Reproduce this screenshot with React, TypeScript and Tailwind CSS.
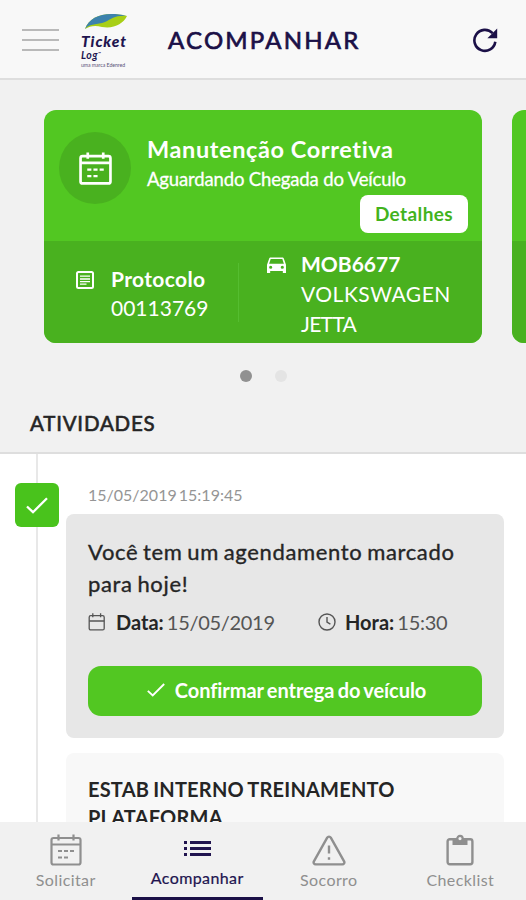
import type { ReactNode } from 'react';

type Tab = 'solicitar' | 'acompanhar' | 'socorro' | 'checklist';

function CalendarIcon({ className, stroke = 2.6 }: { className: string; stroke?: number }) {
  return (
    <svg viewBox="0 0 32 32" className={className} fill="none" stroke="currentColor" strokeWidth={stroke}>
      <rect x="1.5" y="4" width="29" height="26.5" rx="2" />
      <path d="M2 10.5h28M8.5 0.5v6M23.5 0.5v6" />
      <path d="M8 17h4M14 17h4M20 17h4M8 23.5h4M14 23.5h4" strokeWidth="2.2" />
    </svg>
  );
}

function SmallCalendarIcon() {
  return (
    <svg viewBox="0 0 18 18" className="size-[18px]" fill="none" stroke="#555" strokeWidth="1.3">
      <rect x="1.2" y="2.7" width="15" height="14.2" rx="1.5" />
      <path d="M1.2 8h15M4.8 0.3v4M12.6 0.3v4" />
    </svg>
  );
}

function ClockIcon() {
  return (
    <svg viewBox="0 0 18 18" className="size-[18px]" fill="none" stroke="#555" strokeWidth="1.4">
      <circle cx="9" cy="9" r="8" />
      <path d="M9 4v5.2l3.4 1.9" />
    </svg>
  );
}

function DocumentIcon() {
  return (
    <svg viewBox="0 0 18 18" className="size-[18px]" fill="none" stroke="white">
      <rect x="1" y="1" width="16" height="16" rx="1.5" strokeWidth="2" />
      <path d="M4 5.2h10M4 8h10M4 10.6h10M4 13.2h6.5" strokeWidth="1.3" />
    </svg>
  );
}

function CarIcon() {
  return (
    <svg viewBox="3 4.5 18 15.5" className="h-[16px] w-[19px]" fill="white" preserveAspectRatio="none">
      <path d="M18.92 6.01C18.72 5.42 18.16 5 17.5 5h-11c-.66 0-1.21.42-1.42 1.01L3 12v8h3v-2h12v2h3v-8l-2.08-5.99zM6.5 16a1.5 1.5 0 1 1 0-3 1.5 1.5 0 0 1 0 3zm11 0a1.5 1.5 0 1 1 0-3 1.5 1.5 0 0 1 0 3zM5 11l1.5-4.5h11L19 11H5z" />
    </svg>
  );
}

function CheckIcon({ className }: { className: string }) {
  return (
    <svg viewBox="0 0 22 17" className={className} fill="none" stroke="white" strokeWidth="2.3">
      <path d="M1 9.5 7 15.2 21 1.2" />
    </svg>
  );
}

function ListIcon() {
  return (
    <svg viewBox="0 0 27 17" className="h-[17px] w-[27px]" fill="#21144f">
      <path d="M0 1h3v3H0zM0 7h3v3H0zM0 13h3v3H0zM6 1h21v3H6zM6 7h21v3H6zM6 13h21v3H6z" />
    </svg>
  );
}

function WarningIcon() {
  return (
    <svg viewBox="0 0 34 31" className="h-[31px] w-[34px]" fill="none" stroke="currentColor" strokeWidth="2.4" strokeLinejoin="round">
      <path d="M15.2 2.6a2.1 2.1 0 0 1 3.6 0l13.3 23.8a2 2 0 0 1-1.8 3H3.7a2 2 0 0 1-1.8-3z" />
      <path d="M17 10.5v8M17 22.2v2.5" />
    </svg>
  );
}

function ClipboardIcon() {
  return (
    <svg viewBox="0 0 28 32" className="h-[32px] w-[28px]" fill="none" stroke="currentColor" strokeWidth="2.4">
      <rect x="1.6" y="5.2" width="24.8" height="25" rx="2.2" />
      <path d="M6.5 5h4.2a3.3 3.3 0 0 1 6.6 0h4.2v6h-15z" fill="currentColor" stroke="none" />
      <circle cx="14" cy="4.6" r="2.7" fill="#f1f1f1" strokeWidth="2.2" />
    </svg>
  );
}

function RefreshIcon() {
  return (
    <svg viewBox="0 0 26 26" className="size-[26px]" fill="none" stroke="#1b1047" strokeWidth="2.6">
      <path d="M23.3 14.8A10.5 10.5 0 1 1 20.6 6.2" />
      <path d="M25.2 1.4v9.8h-9.8z" fill="#1b1047" stroke="none" />
    </svg>
  );
}

function Logo() {
  return (
    <div className="flex w-[48px] flex-col whitespace-nowrap text-[#21144f]">
      <svg viewBox="0 0 42 17" className="ml-[4px] h-[17px] w-[42px]">
        <path d="M0 16C5 3 20-2 42 3 38 11 29 16 17 14 10 12 5 13 0 16z" fill="#a8cf16" />
        <path d="M0 16C5 3 20-2 42 3 30 2 27 6 20 9 12 12 5 10 0 16z" fill="#3c82ad" />
      </svg>
      <span className="mt-[2px] text-[15.5px] leading-[18px] font-black tracking-[0.9px] italic">Ticket</span>
      <span className="flex text-[10.5px] leading-[11px] font-bold tracking-[0.5px] italic">
        Log<span className="pt-px text-[4px] leading-[5px]">™</span>
      </span>
      <span className="mt-px text-[5.2px] leading-[7px] tracking-[-0.05px] text-[#5a5378]">uma marca Edenred</span>
    </div>
  );
}

function Header() {
  return (
    <header className="flex h-[80px] shrink-0 items-center border-b-2 border-[#dedede] bg-[#f8f8f8]">
      <button className="ml-[22px] flex w-[37px] flex-col gap-[8px] pt-[2px]">
        <span className="h-[2px] w-full bg-[#b9b9b9]" />
        <span className="h-[2px] w-full bg-[#b9b9b9]" />
        <span className="h-[2px] w-full bg-[#b9b9b9]" />
      </button>
      <div className="ml-[22px] pt-[4px]">
        <Logo />
      </div>
      <h1 className="ml-[39px] pt-[2px] text-[24px] tracking-[2.2px] text-[#1b1047] [-webkit-text-stroke:0.7px]">
        ACOMPANHAR
      </h1>
      <button className="mr-[28px] ml-auto pt-[2px]">
        <RefreshIcon />
      </button>
    </header>
  );
}

function OrderCard() {
  return (
    <div className="flex h-[233px] w-[438px] shrink-0 flex-col overflow-hidden rounded-[12px] bg-[#52c722] text-white">
      <div className="flex h-[131px] pt-[22px] pl-[15px]">
        <div className="flex size-[72px] items-center justify-center rounded-full bg-[#49b11f]">
          <CalendarIcon className="size-[33px]" />
        </div>
        <div className="ml-[16px] flex flex-1 flex-col whitespace-nowrap">
          <h2 className="text-[23.5px] leading-[34px] font-bold tracking-[0.6px]">Manutenção Corretiva</h2>
          <p className="text-[18.5px] leading-[26px] tracking-[-0.15px] [-webkit-text-stroke:0.3px]">
            Aguardando Chegada do Veículo
          </p>
          <button className="mt-[3px] mr-[14px] h-[38px] w-[108px] self-end rounded-[8px] bg-white text-[19px] font-bold tracking-[0.4px] text-[#42b31d]">
            Detalhes
          </button>
        </div>
      </div>
      <div className="flex flex-1 bg-[#49b11f]">
        <div className="flex w-[194px] pt-[23px] pl-[32px]">
          <div className="pt-[7px]">
            <DocumentIcon />
          </div>
          <div className="ml-[17px] text-[21px] leading-[29px]">
            <p className="font-bold tracking-[0.35px]">Protocolo</p>
            <p>00113769</p>
          </div>
        </div>
        <div className="mt-[22px] h-[59px] w-px bg-[#55bd30]" />
        <div className="flex pt-[8px] pl-[28px]">
          <div className="pt-[8px]">
            <CarIcon />
          </div>
          <div className="ml-[15px] text-[21px] leading-[30px]">
            <p className="font-bold">MOB6677</p>
            <p className="tracking-[0.5px]">VOLKSWAGEN</p>
            <p className="tracking-[-0.7px]">JETTA</p>
          </div>
        </div>
      </div>
    </div>
  );
}

function Activities() {
  return (
    <section className="flex min-h-0 flex-1 overflow-hidden bg-white">
      <div className="flex w-[74px] shrink-0 flex-col items-center">
        <div className="h-[29px] w-[2px] shrink-0 bg-[#e8e8e8]" />
        <div className="flex size-[44px] shrink-0 items-center justify-center rounded-[6px] bg-[#49c31c]">
          <CheckIcon className="h-[17px] w-[22px]" />
        </div>
        <div className="w-[2px] flex-1 bg-[#e8e8e8]" />
      </div>
      <div className="-ml-[8px] w-[438px] shrink-0">
        <p className="h-[60px] pt-[29px] pl-[22px] text-[16px] leading-[24px] text-[#959595] [word-spacing:-2px]">
          15/05/2019 15:19:45
        </p>
        <article className="h-[224px] rounded-[8px] bg-[#e7e7e7] px-[22px] pt-[22px] text-[#252525]">
          <h3 className="text-[22px] leading-[32px] tracking-[0.65px] whitespace-nowrap [-webkit-text-stroke:0.35px] [word-spacing:-1.5px]">
            Você tem um agendamento marcado
            <br />
            para hoje!
          </h3>
          <div className="mt-[7px] flex h-[30px] items-center text-[20px] whitespace-nowrap">
            <SmallCalendarIcon />
            <p className="ml-[10px] w-[202px]">
              <b>Data:</b> <span className="-ml-[2px] tracking-[-0.3px] text-[#555]">15/05/2019</span>
            </p>
            <ClockIcon />
            <p className="ml-[9px]">
              <b>Hora:</b> <span className="-ml-[2px] tracking-[-0.3px] text-[#555]">15:30</span>
            </p>
          </div>
          <button className="mt-[29px] flex h-[50px] w-full items-center justify-center gap-[10px] rounded-[13px] bg-[#52c722] pb-[3px] pl-[3px] text-[20px] font-bold tracking-[-0.05px] text-white [word-spacing:-1.5px]">
            <CheckIcon className="h-[14px] w-[18px]" />
            <span>Confirmar entrega do veículo</span>
          </button>
        </article>
        <article className="mt-[15px] h-[120px] rounded-t-[8px] bg-[#f8f8f8] px-[22px] pt-[22px]">
          <h3 className="text-[20px] leading-[28px] font-bold tracking-[0.2px] text-[#252525] [word-spacing:-1px]">
            ESTAB INTERNO TREINAMENTO
            <br />
            PLATAFORMA
          </h3>
        </article>
      </div>
    </section>
  );
}

const tabs: { id: Tab; label: string; icon: ReactNode }[] = [
  { id: 'solicitar', label: 'Solicitar', icon: <CalendarIcon className="size-[32px]" stroke={2.2} /> },
  { id: 'acompanhar', label: 'Acompanhar', icon: <ListIcon /> },
  { id: 'socorro', label: 'Socorro', icon: <WarningIcon /> },
  { id: 'checklist', label: 'Checklist', icon: <ClipboardIcon /> },
];

function BottomNav({ active }: { active: Tab }) {
  return (
    <nav className="grid h-[78px] shrink-0 grid-cols-4 bg-[#f1f1f1]">
      {tabs.map((tab) => (
        <button
          key={tab.id}
          className={`flex flex-col items-center border-b-[3px] pt-[11px] text-[16px] leading-[24px] ${
            active === tab.id
              ? 'border-[#1b1047] text-[#21144f] [-webkit-text-stroke:0.2px]'
              : 'border-transparent text-[#8f8f8f]'
          }`}
        >
          <span className={`flex h-[34px] items-center ${active === tab.id ? '-mt-[2px]' : ''}`}>{tab.icon}</span>
          <span className="mt-px tracking-[0.4px]">{tab.label}</span>
        </button>
      ))}
    </nav>
  );
}

function App() {
  return (
    <div className="flex h-[900px] w-[526px] flex-col overflow-hidden bg-[#f1f1f1] font-[Lato,sans-serif]">
      <Header />

      <main className="flex min-h-0 flex-1 flex-col">
        <div className="flex shrink-0 gap-[30px] overflow-hidden pt-[30px] pl-[44px]">
          <OrderCard />
          <div className="flex h-[233px] w-[60px] shrink-0 flex-col overflow-hidden rounded-l-[12px] bg-[#52c722]">
            <div className="mt-[131px] flex-1 bg-[#49b11f]" />
          </div>
        </div>
        <div className="mt-[27px] flex shrink-0 justify-center gap-[23px]">
          <span className="size-[12px] rounded-full bg-[#919191]" />
          <span className="size-[12px] rounded-full bg-[#e4e4e4]" />
        </div>
        <div className="flex h-[72px] shrink-0 items-center border-b-2 border-[#dedede] pt-[12px] pl-[30px]">
          <h2 className="text-[20.5px] tracking-[0.8px] text-[#252525] [-webkit-text-stroke:0.6px]">ATIVIDADES</h2>
        </div>
        <Activities />
      </main>

      <BottomNav active="acompanhar" />
    </div>
  );
}

export default App;
